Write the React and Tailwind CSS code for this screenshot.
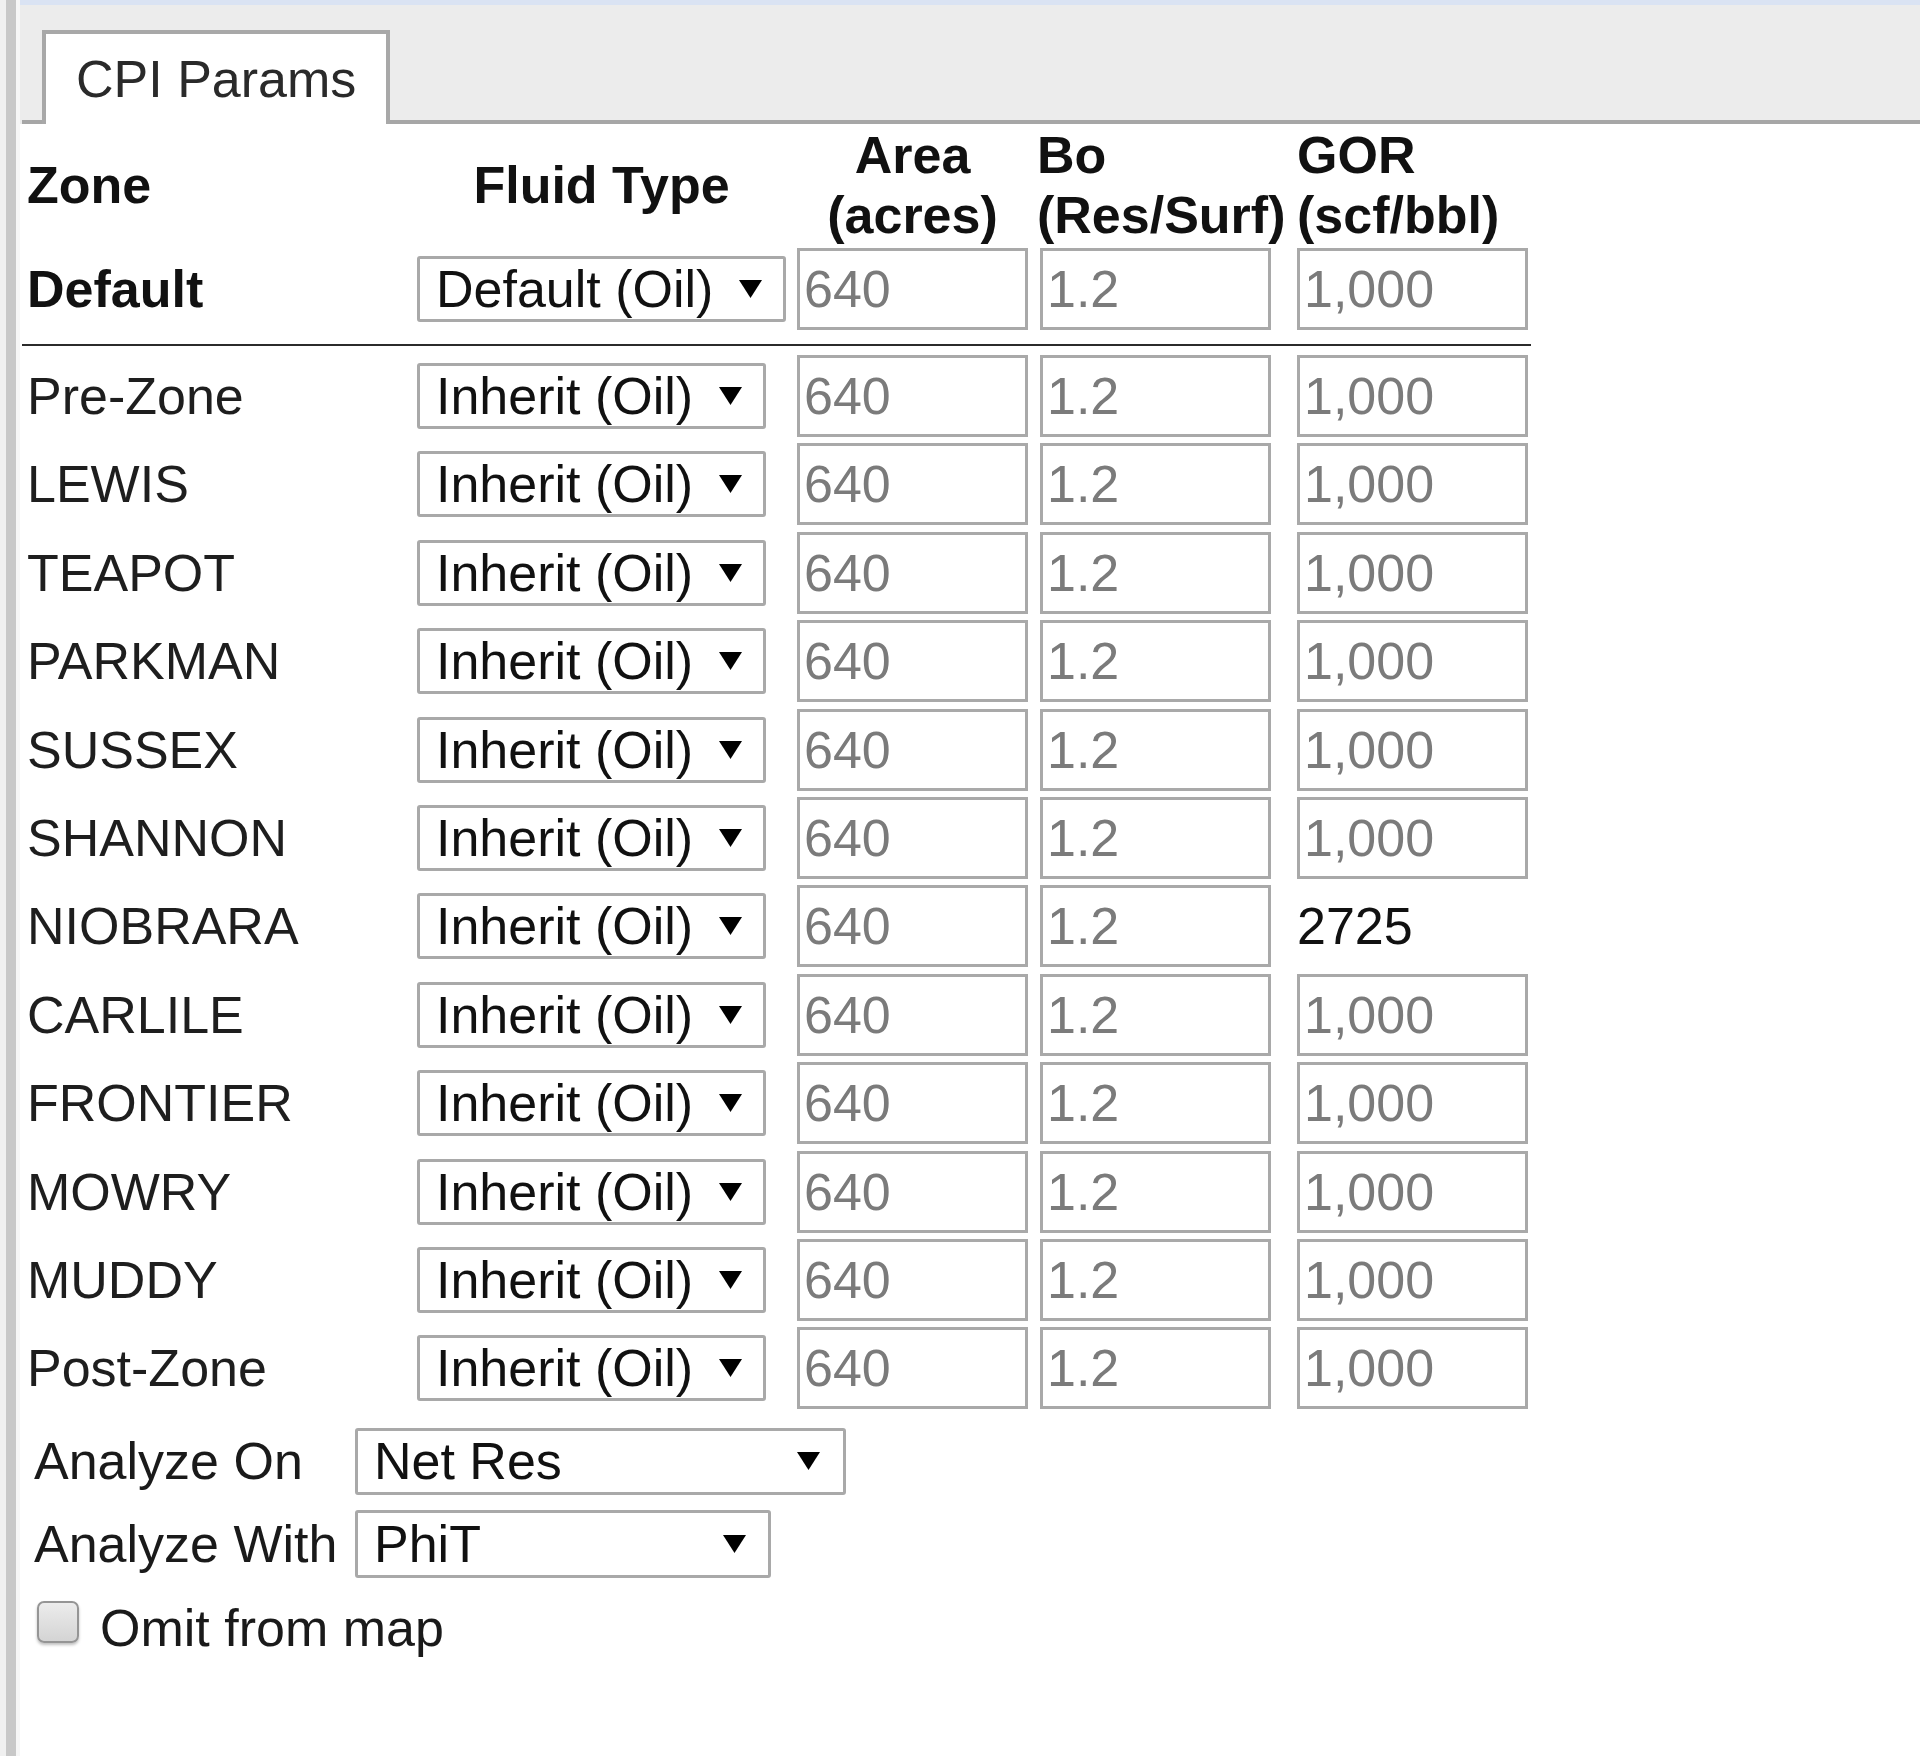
import React from 'react';

const zones = [
  'Pre-Zone', 'LEWIS', 'TEAPOT', 'PARKMAN', 'SUSSEX', 'SHANNON',
  'NIOBRARA', 'CARLILE', 'FRONTIER', 'MOWRY', 'MUDDY', 'Post-Zone',
];

const Arrow = () => (
  <svg width="23" height="18" viewBox="0 0 23 18" className="shrink-0">
    <polygon points="0,0 23,0 11.5,18" fill="#000" />
  </svg>
);

// fake select box, the page draws its own arrow
const Select = ({ value, className, pl = 'pl-[16px]', pr = 'pr-[21px]' }) => (
  <div className={`${className} ${pl} ${pr} flex items-center justify-between border-[3px] border-[#a9a9a9] rounded-[3px] bg-white text-[#111]`}>
    <span className="leading-none">{value}</span>
    <Arrow />
  </div>
);

const Field = ({ value }) => (
  <div className="w-[231px] h-[82px] border-[3px] border-[#a9a9a9] bg-white pl-[4px] flex items-center text-[#7b7b7b] leading-none">
    {value}
  </div>
);

const Row = ({ name, bold, first, gor }) => (
  <div className="grid grid-cols-[395px_380px_243px_257px_240px] items-center h-[88.4px]">
    <div className={`pl-[5px] leading-none ${bold ? 'font-bold text-[#111]' : 'text-[#1e1e1e]'}`}>{name}</div>
    <div>
      {first ? (
        <Select value="Default (Oil)" className="w-[369px] h-[66px]" />
      ) : (
        <Select value="Inherit (Oil)" className="w-[349px] h-[66px]" />
      )}
    </div>
    <Field value="640" />
    <Field value="1.2" />
    {gor ? (
      <div className="text-[#111] leading-none">{gor}</div>
    ) : (
      <Field value="1,000" />
    )}
  </div>
);

export default function App() {
  return (
    <div className="w-[1920px] min-h-[1756px] flex bg-white text-[52px] font-['Liberation_Sans',Arial,sans-serif]">
      {/* left frame edge */}
      <div className="w-[6px] bg-[#f0f0f0]" />
      <div className="w-[10px] bg-[#c8c8c8]" />
      <div className="w-[4px] bg-[#f6f6f6]" />

      <div className="flex-1 flex flex-col">
        <div className="h-[5px] bg-[#dae3f3]" />

        {/* tab strip */}
        <div className="h-[119px] bg-[#ececec] flex items-end pl-[2px]">
          <div className="w-[20px] h-[4px] bg-[#a6a6a6]" />
          <div className="w-[348px] h-[94px] border-[4px] border-b-0 border-[#a8a8a8] bg-white flex items-center pl-[30px] text-[#2a2a2a] leading-none">
            CPI Params
          </div>
          <div className="flex-1 h-[4px] bg-[#a6a6a6]" />
        </div>

        <div className="pl-[2px]">
          {/* header */}
          <div className="grid grid-cols-[395px_380px_243px_257px_240px] items-center h-[121px] font-bold text-[#111] leading-[60px]">
            <div className="pl-[5px]">Zone</div>
            <div className="w-[369px] text-center">Fluid Type</div>
            <div className="w-[231px] text-center">
              <div>Area</div>
              <div>(acres)</div>
            </div>
            <div className="-ml-[3px] whitespace-nowrap">
              <div>Bo</div>
              <div>(Res/Surf)</div>
            </div>
            <div className="whitespace-nowrap">
              <div>GOR</div>
              <div>(scf/bbl)</div>
            </div>
          </div>

          <Row name="Default" bold first />
          <div className="mt-[11px] mb-[5.5px] w-[1509px] h-[2px] bg-[#2b2b2b]" />

          {zones.map((z) => (
            <Row key={z} name={z} gor={z === 'NIOBRARA' ? '2725' : null} />
          ))}

          {/* analysis options */}
          <div className="mt-[7px] text-[#1a1a1a]">
            <div className="flex items-center h-[83px]">
              <div className="w-[333px] pl-[12px] leading-none">Analyze On</div>
              <Select value="Net Res" className="w-[491px] h-[67px]" pl="pl-[16px]" pr="pr-[23px]" />
            </div>
            <div className="flex items-center h-[83px]">
              <div className="w-[333px] pl-[12px] leading-none">Analyze With</div>
              <Select value="PhiT" className="w-[416px] h-[68px]" pl="pl-[16px]" pr="pr-[22px]" />
            </div>
            <div className="flex items-center h-[84px] pl-[15px]">
              <div className="w-[42px] h-[42px] rounded-[7px] border-2 border-[#959595] bg-gradient-to-b from-[#ececec] to-[#d4d4d4] shadow-[0_2px_3px_rgba(0,0,0,0.25)] -mt-[12px]" />
              <div className="ml-[21px] leading-none">Omit from map</div>
            </div>
          </div>
        </div>
      </div>
    </div>
  );
}
